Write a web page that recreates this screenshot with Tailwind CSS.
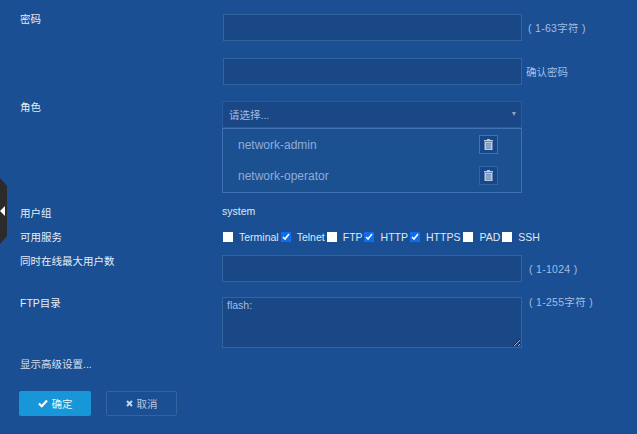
<!DOCTYPE html>
<html lang="zh">
<head>
    <meta charset="UTF-8">
    <title>用户</title>
    <script src="https://cdn.jsdelivr.net/npm/@tailwindcss/browser@4"></script>
</head>
<body>
    <div class="relative w-[637px] h-[434px] overflow-hidden bg-[#1a4f94] text-[10.5px] leading-[14px] text-white font-['Liberation_Sans','Noto_Sans_CJK_SC',sans-serif]">
        <!-- collapse tab -->
        <div class="absolute left-0 top-[178px] w-[7px] h-[66px] bg-[#2b2b2b] [clip-path:polygon(0_0,100%_8px,100%_calc(100%-8px),0_100%)]"></div>
        <div class="absolute left-0 top-[206px] w-0 h-0 border-y-[5px] border-y-transparent border-r-[5px] border-r-white"></div>

        <main class="flex flex-col pl-[20px] pt-[14px]">
            <div class="flex h-[27px]">
                <label class="w-[203px] mt-[-2px] text-[#e6edf6]">密码</label>
                <input type="password" class="w-[299px] h-[27px] bg-[#1a4785] border border-[#33649f]">
                <span class="ml-[6px] mt-[7px] text-[#a3bde0] tracking-[0.3px]">( 1-63字符 )</span>
            </div>
            <div class="flex h-[27px] mt-[17px]">
                <div class="w-[203px]"></div>
                <input type="password" class="w-[299px] h-[27px] bg-[#1a4785] border border-[#33649f]">
                <span class="ml-[4px] mt-[7px] text-[#a3bde0]">确认密码</span>
            </div>
            <div class="flex mt-[16px]">
                <label class="w-[202px] mt-[-1px] text-[#e6edf6]">角色</label>
                <div class="w-[300px]">
                    <div class="flex items-center justify-between h-[27px] pl-[6px] pr-[5px] bg-[#1a4785] border border-[#2a5c9c] text-[#a3bde0]">
                        <span>请选择...</span>
                        <span class="w-0 h-0 border-x-[2.5px] border-x-transparent border-t-[4px] border-t-[#8fa6c4] mb-[2px]"></span>
                    </div>
                    <div class="h-[65px] flex flex-col border border-[#4272b3] bg-[#1b5091] text-[12px] text-[#8fadd9]">
                        <div class="flex items-center justify-between h-[31px] pl-[15px] pr-[23px]">
                            <span>network-admin</span>
                            <button class="flex items-center justify-center w-[19px] h-[19px] bg-[#17468a] border border-[#4272b3]">
                                <svg width="9" height="11" viewBox="0 0 9 11" fill="#b9cbe0"><path d="M3 0h3v1h3v1.500H0V1h3zM.5 3h8v8h-8zM2 4.500V9.500h5V4.500z" fill-rule="evenodd"/><path d="M2 4.500h5v5H2z" fill="#8ea6c2"/></svg>
                            </button>
                        </div>
                        <div class="flex items-center justify-between h-[31px] pl-[15px] pr-[23px]">
                            <span>network-operator</span>
                            <button class="flex items-center justify-center w-[19px] h-[19px] bg-[#17468a] border border-[#33649f]">
                                <svg width="9" height="11" viewBox="0 0 9 11" fill="#b9cbe0"><path d="M3 0h3v1h3v1.500H0V1h3zM.5 3h8v8h-8zM2 4.500V9.500h5V4.500z" fill-rule="evenodd"/><path d="M2 4.500h5v5H2z" fill="#8ea6c2"/></svg>
                            </button>
                        </div>
                    </div>
                </div>
            </div>
            <div class="flex mt-[11px] h-[14px]">
                <label class="w-[202px] text-[#e6edf6] mt-[2px]">用户组</label>
                <span class="text-[#dfe8f4]">system</span>
            </div>
            <div class="flex items-center mt-[12px] h-[14px]">
                <label class="w-[203px] text-[#e6edf6]">可用服务</label>
                <input type="checkbox" class="w-[10px] h-[10px] appearance-none bg-white">
                <span class="ml-[6px] text-[#dfe8f4]">Terminal</span>
                <input type="checkbox" checked class="w-[10px] h-[10px] ml-[2px] accent-[#0a6cf0]">
                <span class="ml-[6px] text-[#dfe8f4]">Telnet</span>
                <input type="checkbox" class="w-[10px] h-[10px] ml-[2px] appearance-none bg-white">
                <span class="ml-[6px] text-[#dfe8f4]">FTP</span>
                <input type="checkbox" checked class="w-[10px] h-[10px] ml-[1px] accent-[#0a6cf0]">
                <span class="ml-[7px] text-[#dfe8f4]">HTTP</span>
                <input type="checkbox" checked class="w-[10px] h-[10px] ml-[2px] accent-[#0a6cf0]">
                <span class="ml-[6px] text-[#dfe8f4]">HTTPS</span>
                <input type="checkbox" class="w-[10px] h-[10px] ml-[3px] appearance-none bg-white">
                <span class="ml-[6px] text-[#dfe8f4]">PAD</span>
                <input type="checkbox" class="w-[10px] h-[10px] ml-[2px] appearance-none bg-white">
                <span class="ml-[6px] text-[#dfe8f4]">SSH</span>
            </div>
            <div class="flex h-[27px] mt-[11px]">
                <label class="w-[202px] mt-[-1px] text-[#e6edf6]">同时在线最大用户数</label>
                <input type="text" class="w-[300px] h-[27px] bg-[#1a4785] border border-[#33649f]">
                <span class="ml-[7px] mt-[7px] text-[#a3bde0] tracking-[0.3px]">( 1-1024 )</span>
            </div>
            <div class="flex h-[51px] mt-[15px]">
                <label class="w-[202px] mt-[-1px] text-[#e6edf6]">FTP目录</label>
                <textarea class="w-[300px] h-[51px] px-[4px] py-0 bg-[#1a4785] border border-[#33649f] text-[#a3bde0]">flash:</textarea>
                <span class="ml-[7px] mt-[-2px] text-[#a3bde0] tracking-[0.3px]">( 1-255字符 )</span>
            </div>
            <a class="mt-[9px] text-[#d5e0ef]">显示高级设置...</a>
            <div class="flex gap-[15px] mt-[20px] ml-[-1px]">
                <button class="flex items-center justify-center gap-[4px] w-[72px] h-[25px] rounded-[2px] bg-[#1897d8] text-[#e8f4fb]">
                    <svg width="10" height="9" viewBox="0 0 10 9" fill="none" stroke="#fff" stroke-width="2.2"><path d="M1 4.500l2.700 2.700L9 1.500"/></svg>
                    确定
                </button>
                <button class="flex items-center justify-center gap-[4px] w-[71px] h-[25px] rounded-[2px] border border-[#33649f] text-[#b5c9e4]">
                    <svg width="7" height="7" viewBox="0 0 7 7" fill="none" stroke="#c5d5ea" stroke-width="2"><path d="M1 1l5 5M6 1L1 6"/></svg>
                    取消
                </button>
            </div>
        </main>
    </div>
</body>
</html>
